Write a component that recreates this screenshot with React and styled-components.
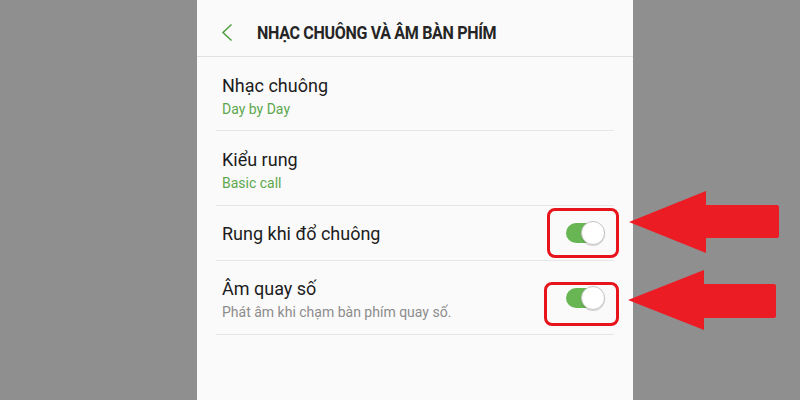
import React from "react";
import styled, { createGlobalStyle } from "styled-components";

const Global = createGlobalStyle`
  html, body { margin: 0; padding: 0; }
  body { background: #8f8f8f; font-family: Roboto, "Noto Sans", sans-serif; }
`;

const Page = styled.div`
  position: relative;
  width: 800px;
  height: 400px;
  overflow: hidden;
  background: #8f8f8f;
  display: flex;
  padding-left: 197px;
  box-sizing: border-box;
`;

const Phone = styled.div`
  width: 436px;
  height: 400px;
  background: #fafafa;
  display: flex;
  flex-direction: column;
`;

const Header = styled.div`
  height: 57px;
  box-sizing: border-box;
  padding-top: 8px;
  display: flex;
  align-items: center;
  border-bottom: 1px solid #e2e2e2;
  padding-left: 23px;
`;

const BackIcon = styled.svg`
  width: 14px;
  height: 19px;
  flex: none;
`;

const Title = styled.div`
  margin-left: 23px;
  font-family: Roboto, sans-serif;
  font-weight: 700;
  font-size: 19px;
  letter-spacing: -0.4px;
  color: #252525;
  transform: scaleX(0.845);
  transform-origin: left center;
  white-space: nowrap;
`;

const List = styled.div`
  display: flex;
  flex-direction: column;
  padding: 0 19px;
`;

const Row = styled.div`
  height: ${(p) => p.$h}px;
  box-sizing: border-box;
  border-bottom: 1.5px solid #e6e6e6;
  display: flex;
  align-items: center;
  justify-content: space-between;
  padding: ${(p) => p.$pt || 0}px 9px 0 6px;
`;

const Texts = styled.div`
  display: flex;
  flex-direction: column;
  gap: 3px;
`;

const Label = styled.div`
  font-size: 18px;
  line-height: 23px;
  color: #1c1c1c;
`;

const Sub = styled.div`
  font-size: 14px;
  line-height: 18px;
  color: ${(p) => (p.$muted ? "#8c8c8c" : "#5da84e")};
`;

const ToggleWrap = styled.div`
  position: relative;
  width: 39px;
  height: 24px;
  flex: none;
  margin-top: ${(p) => p.$mt || 0}px;
`;

const Track = styled.div`
  position: absolute;
  left: 0;
  top: 2px;
  width: 37px;
  height: 20px;
  border-radius: 10px;
  background: #68b554;
`;

const Thumb = styled.div`
  position: absolute;
  right: 0;
  top: 0;
  width: 22px;
  height: 22px;
  border-radius: 50%;
  background: #fff;
  border: 1px solid #c4c4c4;
  box-shadow: 0 1px 1px rgba(0,0,0,0.15);
`;

const Mark = styled.div`
  position: absolute;
  left: ${(p) => p.$l}px;
  right: ${(p) => p.$r}px;
  top: ${(p) => p.$t}px;
  bottom: ${(p) => p.$b}px;
  border: 3.5px solid #e8141c;
  border-radius: 8px;
  pointer-events: none;
`;

const Arrows = styled.svg`
  position: absolute;
  left: 0;
  top: 0;
  width: 800px;
  height: 400px;
  pointer-events: none;
`;

function Toggle({ mark, mt }) {
  return (
    <ToggleWrap $mt={mt}>
      <Track />
      <Thumb />
      {mark && <Mark $l={mark[0]} $r={mark[1]} $t={mark[2]} $b={mark[3]} />}
    </ToggleWrap>
  );
}

export default function App() {
  return (
    <>
      <Global />
      <Page>
        <Phone>
          <Header>
            <BackIcon viewBox="0 0 14 19">
              <path d="M11.5 1.5 L3 9.5 L11.5 17.5" fill="none" stroke="#4e9d40" strokeWidth="1.5" />
            </BackIcon>
            <Title>NHẠC CHUÔNG VÀ ÂM BÀN PHÍM</Title>
          </Header>
          <List>
            <Row $h={74} $pt={4}>
              <Texts>
                <Label>Nhạc chuông</Label>
                <Sub>Day by Day</Sub>
              </Texts>
            </Row>
            <Row $h={75} $pt={3}>
              <Texts>
                <Label>Kiểu rung</Label>
                <Sub>Basic call</Sub>
              </Texts>
            </Row>
            <Row $h={55} $pt={1}>
              <Label>Rung khi đổ chuông</Label>
              <Toggle mt={-1} mark={[-19, -14, -13, -13]} />
            </Row>
            <Row $h={74} $pt={3}>
              <Texts>
                <Label>Âm quay số</Label>
                <Sub $muted>Phát âm khi chạm bàn phím quay số.</Sub>
              </Texts>
              <Toggle mt={-3} mark={[-22, -14, -4, -16]} />
            </Row>
          </List>
        </Phone>
        <Arrows viewBox="0 0 800 400">
          <path
            d="M629 222 L706 191 L706 205 L777 205 Q779 205 779 207 L779 236 Q779 238 777 238 L706 238 L706 253 Z"
            fill="#ec1c24"
          />
          <path
            d="M628 300 L704 270 L704 284 L774 284 Q776 284 776 286 L776 316 Q776 318 774 318 L704 318 L704 330 Z"
            fill="#ec1c24"
          />
        </Arrows>
      </Page>
    </>
  );
}
